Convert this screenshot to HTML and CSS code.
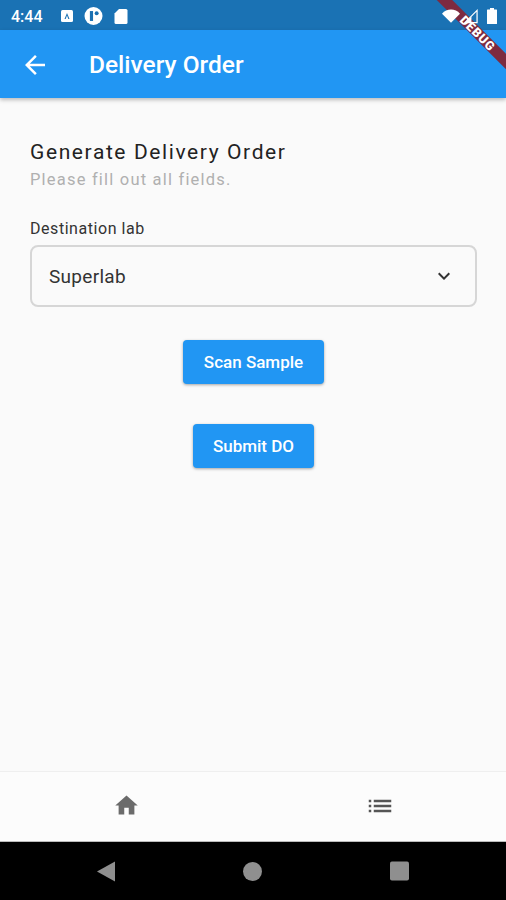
FILE: index.html
```html
<!DOCTYPE html>
<html lang="en">
<head>
<meta charset="utf-8">
<title>Delivery Order</title>
<link rel="stylesheet" href="styles.css">
</head>
<body>
<div class="phone">
  <div class="status">
    <span class="time">4:44</span>
    <svg class="s-a" width="12" height="12" viewBox="0 0 12 12"><rect width="12" height="12" rx="1.5" fill="#fff"/><path d="M3.500 9 6 3l2.500 6H7.300L6 5.600 4.700 9z" fill="#1a70b2"/></svg>
    <svg class="s-f" width="19" height="18" viewBox="0 0 20 20"><circle cx="10" cy="10" r="10" fill="#fff"/><rect x="6" y="4.500" width="3.500" height="11" fill="#1a70b2"/><circle cx="13.500" cy="7" r="2.200" fill="#1a70b2"/></svg>
    <svg class="s-sd" width="14" height="15" viewBox="0 0 13 15"><path d="M4.500 0H11.500A1.500 1.500 0 0 1 13 1.500V13.500A1.500 1.500 0 0 1 11.500 15H1.500A1.500 1.500 0 0 1 0 13.500V4.500z" fill="#fff"/></svg>
    <span class="status-space"></span>
    <svg class="s-wifi" width="18" height="14" viewBox="0 0 19 14"><path d="M0 4.500C5-1.300 14-1.300 19 4.500L9.500 14z" fill="#fff"/></svg>
    <svg class="s-sig" width="14" height="15" viewBox="0 0 15 15"><path d="M14 1V14H1z" fill="none" stroke="#fff" stroke-width="1.300"/><path d="M8 7.500V14H1z" fill="#fff"/></svg>
    <svg class="s-bat" width="10" height="16" viewBox="0 0 10 16"><path d="M3 0H7V1.500H9.500A.5.5 0 0 1 10 2V15.500A.5.5 0 0 1 9.500 16H.5A.5.5 0 0 1 0 15.500V2A.5.5 0 0 1 .5 1.500H3z" fill="#fff"/></svg>
  </div>
  <header class="appbar">
    <svg class="back" width="30" height="30" viewBox="0 0 24 24"><path d="M20 11H7.830l5.590-5.590L12 4l-8 8 8 8 1.410-1.410L7.830 13H20z" fill="#fff"/></svg>
    <h1 class="title">Delivery Order</h1>
  </header>
  <main class="content">
    <h2 class="heading">Generate Delivery Order</h2>
    <p class="sub">Please fill out all fields.</p>
    <label class="label">Destination lab</label>
    <div class="select">
      <span class="select-value">Superlab</span>
      <svg width="24" height="24" viewBox="0 0 24 24"><path d="M7.410 8.590 12 13.170l4.590-4.580L18 10l-6 6-6-6z" fill="#333"/></svg>
    </div>
    <button class="btn btn-scan">Scan Sample</button>
    <button class="btn btn-submit">Submit DO</button>
  </main>
  <nav class="bottomnav">
    <div class="nav-item"><svg width="27" height="27" viewBox="0 0 24 24"><path d="M10 20v-6h4v6h5v-8h3L12 3 2 12h3v8z" fill="#6b6b6b"/></svg></div>
    <div class="nav-item"><svg width="30" height="30" viewBox="0 0 24 24"><path d="M3 13h2v-2H3v2zm0 4h2v-2H3v2zm0-8h2V7H3v2zm4 4h14v-2H7v2zm0 4h14v-2H7v2zM7 7v2h14V7H7z" fill="#555"/></svg></div>
  </nav>
  <div class="sysnav">
    <svg width="18" height="21" viewBox="0 0 18 20"><path d="M18 0V20L0 10z" fill="#8f8f8f"/></svg>
    <svg width="19" height="19" viewBox="0 0 18 18"><circle cx="9" cy="9" r="9" fill="#8f8f8f"/></svg>
    <svg width="19" height="20" viewBox="0 0 20 20"><rect width="20" height="20" rx="2" fill="#8f8f8f"/></svg>
  </div>
  <div class="debug"><span>DEBUG</span></div>
</div>
</body>
</html>
```
FILE: styles.css
```css
* { box-sizing: border-box; }
html, body { margin: 0; padding: 0; }
body { font-family: Roboto, "Liberation Sans", sans-serif; background: #fafafa; }
.phone { position: relative; width: 506px; height: 900px; overflow: hidden; display: flex; flex-direction: column; }
.phone::before { content: ""; position: absolute; top: 0; left: 0; right: 0; height: 30px; background: #1a72b4; }
.status { position: relative; z-index: 3; height: 30px; flex: none; display: flex; align-items: center; padding: 2px 9px 0 11px; color: #fff; }
.time { font-size: 16px; font-weight: 500; width: 50px; }
.s-a { margin-right: 11px; }
.s-f { margin-right: 11px; }
.status-space { flex: 1; }
.s-wifi { margin-right: 4px; }
.s-sig { margin-right: 9px; }
.appbar { height: 68px; flex: none; background: #2196f3; display: flex; align-items: center; padding: 1px 0 0 20px; box-shadow: 0 2px 4px rgba(0,0,0,.25); position: relative; z-index: 1; }
.back { margin-right: 39px; }
.title { margin: 0; font-size: 24.500px; font-weight: 500; color: #fff; }
.content { flex: 1; display: flex; flex-direction: column; align-items: center; padding: 41px 29px 0 30px; }
.heading { align-self: flex-start; margin: 0; font-size: 21px; font-weight: 400; letter-spacing: 1.600px; line-height: 26px; color: #222; }
.sub { align-self: flex-start; margin: 5px 0 0; font-size: 16.500px; letter-spacing: 1.200px; line-height: 20px; color: #b0b0b0; }
.label { align-self: flex-start; margin-top: 29px; font-size: 16px; line-height: 20px; letter-spacing: .55px; color: #333; }
.select { align-self: stretch; margin-top: 6px; height: 62px; border: 2px solid #d6d6d6; border-radius: 8px; display: flex; align-items: center; justify-content: space-between; padding: 0 19px 0 17px; }
.select-value { font-size: 19px; letter-spacing: .3px; color: #333; }
.btn { border: 0; border-radius: 4px; background: #2196f3; color: #fff; font-family: inherit; font-size: 17px; font-weight: 500; height: 44px; box-shadow: 0 1px 3px rgba(0,0,0,.35); padding: 0; }
.btn-scan { width: 141px; margin-top: 33px; }
.btn-submit { width: 121px; margin-top: 40px; }
.bottomnav { height: 71px; flex: none; background: #fcfcfc; border-top: 1px solid #efefef; border-bottom: 1px solid #bbb; display: flex; }
.nav-item { flex: 1; display: flex; align-items: center; justify-content: center; padding-bottom: 2px; }
.sysnav { height: 58px; flex: none; background: #000; display: flex; align-items: center; justify-content: center; gap: 128px; }
.debug { position: absolute; top: 25px; left: 420px; width: 110px; height: 11px; background: #7d2a40; transform: rotate(45deg); display: flex; align-items: center; justify-content: center; z-index: 2; padding-left: 8px; }
.debug span { font-size: 12.500px; font-weight: 900; letter-spacing: .8px; color: #fff; }
```
